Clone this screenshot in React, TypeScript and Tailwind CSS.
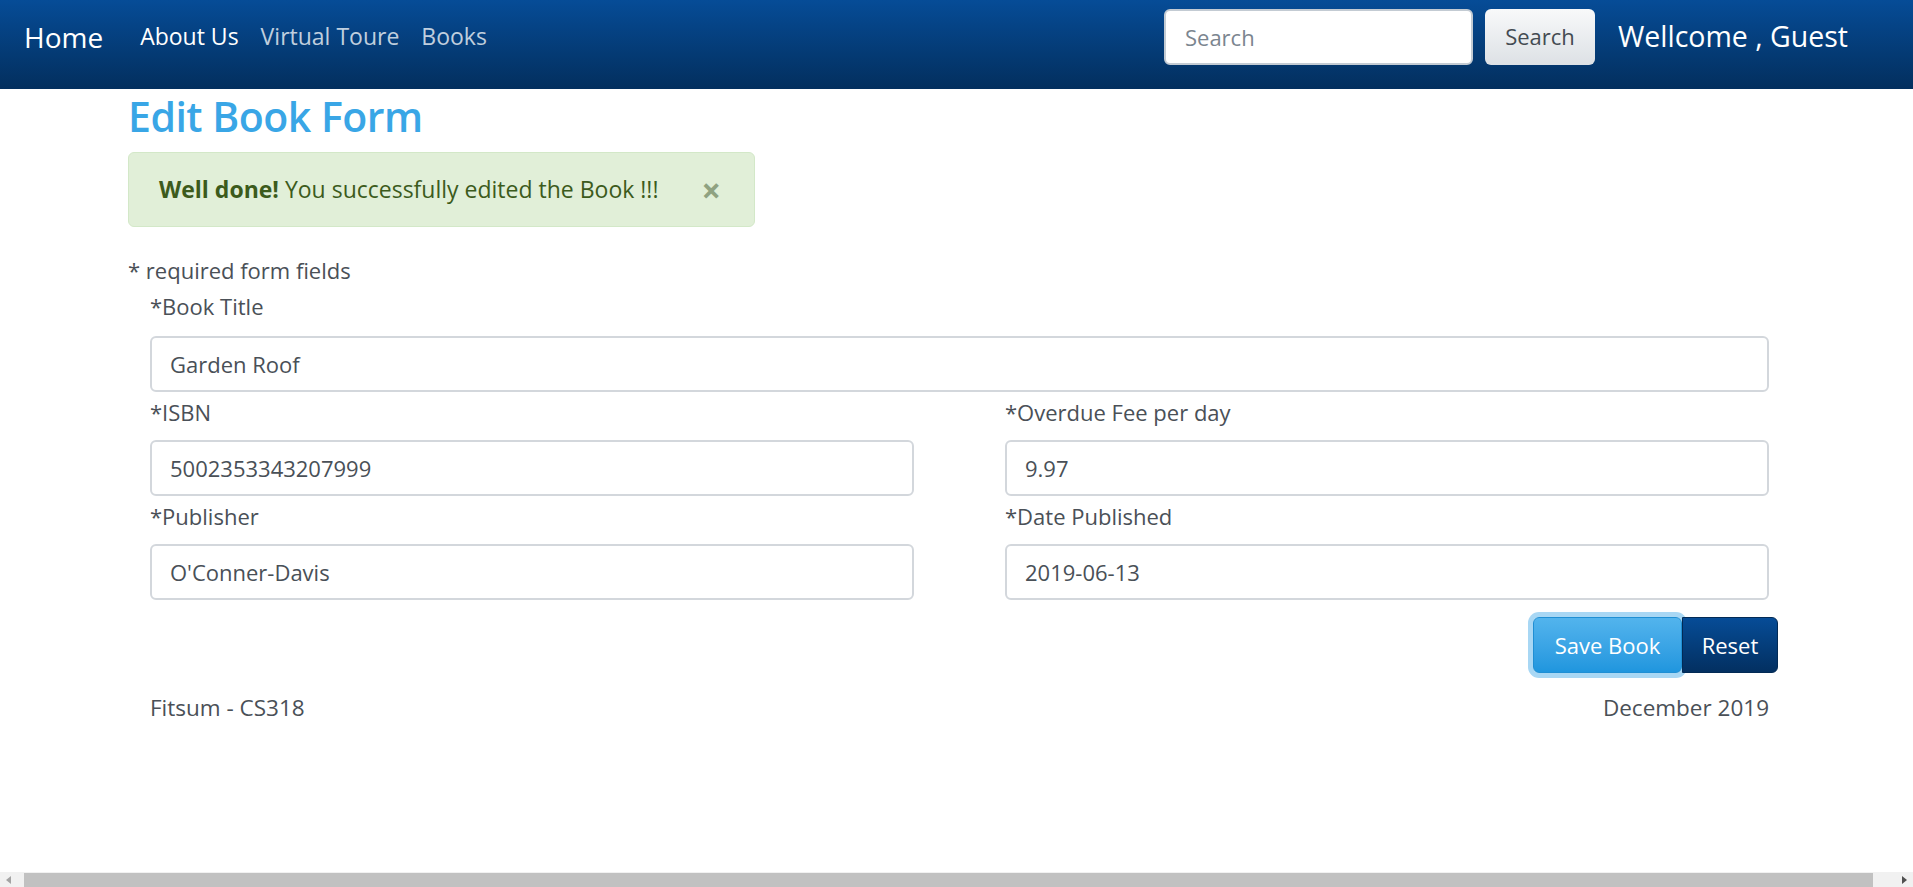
export default function App() {
  return (
    <div className="flex h-[887px] w-full flex-col overflow-hidden bg-white font-['Open_Sans',sans-serif]">
      <nav className="flex h-[89px] shrink-0 items-center bg-linear-to-b from-[#064c97] to-[#032f5e] pb-[16px] pl-[24px] pr-[65px]">
        <a className="mr-[37px] text-[28px] leading-none text-white">Home</a>
        <div className="flex gap-[22px] text-[23px] leading-none">
          <a className="text-white">About Us</a>
          <a className="text-white/75">Virtual Toure</a>
          <a className="text-white/75">Books</a>
        </div>
        <div className="ml-auto flex items-center">
          <input
            placeholder="Search"
            className="h-[56px] w-[309px] rounded-[6px] border-2 border-[#c3cbd3] bg-white px-[19px] text-[22px] text-[#495057] outline-none placeholder:text-[#7b858f]"
          />
          <button className="ml-[12px] h-[56px] w-[110px] rounded-[6px] bg-linear-to-b from-[#f8f9fa] to-[#dde1e5] text-[22px] text-[#444b52]">
            Search
          </button>
          <span className="ml-[23px] text-[28.5px] leading-none text-white">Wellcome , Guest</span>
        </div>
      </nav>

      <main className="flex-1 pl-[128px]">
        <div className="w-[1663px]">
          <h2 className="text-[41px] font-semibold leading-[54px] tracking-[-0.5px] text-[#39a6e6]">Edit Book Form</h2>
          <div className="mt-[9px] flex h-[75px] w-[627px] items-center rounded-[6px] border border-[#d3e8c8] bg-[#e1efd8] pl-[30px] text-[23px] text-[#3c5b1c]">
            <span>
              <b className="font-bold">Well done!</b> You successfully edited the Book !!!
            </span>
            <span className="ml-auto mr-[33px] text-[34px] font-bold leading-none text-[#8fa281]">×</span>
          </div>
          <p className="mt-[27px] text-[22px] leading-[33px] text-[#4a5057]">* required form fields</p>

          <form className="mt-[3px] px-[22px] text-[22px] text-[#4a5057]">
            <div className="mb-[4px]">
              <label className="mb-[13px] block leading-[33px]">*Book Title</label>
              <input
                defaultValue="Garden Roof"
                className="block h-[56px] w-full rounded-[6px] border-2 border-[#d3d7dc] px-[18px] text-[22px] text-[#495057] outline-none"
              />
            </div>
            <div className="grid grid-cols-2 gap-x-[91px]">
              <div className="mb-[4px]">
                <label className="mb-[11px] block leading-[33px]">*ISBN</label>
                <input
                  defaultValue="5002353343207999"
                  className="block h-[56px] w-full rounded-[6px] border-2 border-[#d3d7dc] px-[18px] text-[22px] text-[#495057] outline-none"
                />
              </div>
              <div className="mb-[4px]">
                <label className="mb-[11px] block leading-[33px]">*Overdue Fee per day</label>
                <input
                  defaultValue="9.97"
                  className="block h-[56px] w-full rounded-[6px] border-2 border-[#d3d7dc] px-[18px] text-[22px] text-[#495057] outline-none"
                />
              </div>
              <div className="mb-[4px]">
                <label className="mb-[11px] block leading-[33px]">*Publisher</label>
                <input
                  defaultValue="O'Conner-Davis"
                  className="block h-[56px] w-full rounded-[6px] border-2 border-[#d3d7dc] px-[18px] text-[22px] text-[#495057] outline-none"
                />
              </div>
              <div className="mb-[4px]">
                <label className="mb-[11px] block leading-[33px]">*Date Published</label>
                <input
                  defaultValue="2019-06-13"
                  className="block h-[56px] w-full rounded-[6px] border-2 border-[#d3d7dc] px-[18px] text-[22px] text-[#495057] outline-none"
                />
              </div>
            </div>
            <div className="-mr-[9px] mt-[13px] flex justify-end">
              <button
                type="button"
                className="h-[56px] w-[149px] rounded-[6px] border border-[#1f8fd4] bg-linear-to-b from-[#52b4ed] to-[#1f96de] text-[22px] text-white shadow-[0_0_0_5px_#a8d7f4]"
              >
                Save Book
              </button>
              <button
                type="button"
                className="h-[56px] w-[96px] rounded-r-[6px] border border-[#022a55] bg-linear-to-b from-[#064c97] to-[#033061] text-[22px] text-white"
              >
                Reset
              </button>
            </div>
            <div className="mt-[18px] flex justify-between text-[22.5px] leading-[33px]">
              <span>Fitsum - CS318</span>
              <span>December 2019</span>
            </div>
          </form>
        </div>
      </main>

      <div className="flex h-[15px] shrink-0 items-center bg-[#f1f1f1]">
        <div className="flex w-[17px] justify-center">
          <svg width="5" height="8" viewBox="0 0 5 8">
            <polygon points="5,0 0,4 5,8" fill="#a3a3a3" />
          </svg>
        </div>
        <div className="ml-[7px] mt-[1px] h-[14px] w-[1849px] bg-[#c1c1c1]" />
        <div className="flex-1" />
        <div className="flex w-[17px] justify-center">
          <svg width="5" height="8" viewBox="0 0 5 8">
            <polygon points="0,0 5,4 0,8" fill="#505050" />
          </svg>
        </div>
      </div>
    </div>
  );
}
